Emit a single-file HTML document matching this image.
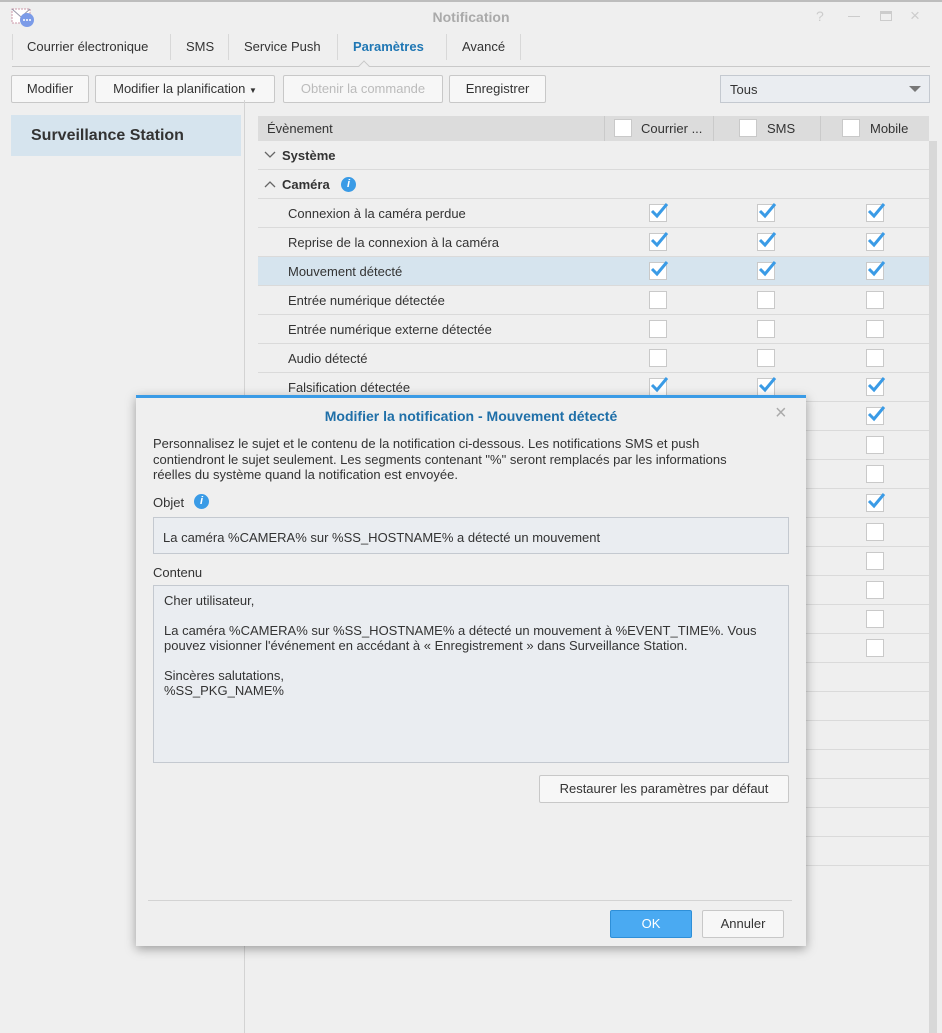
<!DOCTYPE html>
<html><head><meta charset="utf-8"><style>
*{box-sizing:border-box;margin:0;padding:0}
body{width:942px;height:1033px;background:#efefef;font-family:"Liberation Sans",sans-serif;font-size:13px;color:#333;position:relative;overflow:hidden}
.a{position:absolute}
.btn{position:absolute;top:75px;height:28px;border:1px solid #c8c8c8;border-radius:2px;background:#f7f7f7;line-height:26px;text-align:center;color:#333}
.tab{position:absolute;top:39px;color:#333}
.sep{position:absolute;top:34px;width:1px;height:26px;background:#d8d8d8}
.row{position:absolute;left:258px;width:671px;height:29px;border-bottom:1px solid #dadada}
.row span{position:absolute;left:30px;top:7px}
.cb{position:absolute;width:18px;height:18px;background:#fff;border:1px solid #c9c9c9}
.cb svg{position:absolute;left:-1px;top:-4px}
</style></head><body>
<div class="a" style="left:0;top:0;width:942px;height:2px;background:#bdbdbd"></div>
<svg class="a" style="left:11px;top:6px" width="26" height="22"><rect x="1" y="3" width="18" height="14" fill="#fff" stroke="#c9a" stroke-dasharray="2 1"/><path d="M1 3 L10 11 L19 3" stroke="#99a" fill="none"/><circle cx="16" cy="14" r="7" fill="#7b9be8"/><circle cx="13" cy="14" r="1" fill="#fff"/><circle cx="16" cy="14" r="1" fill="#fff"/><circle cx="19" cy="14" r="1" fill="#fff"/></svg>
<div class="a" style="left:0;width:942px;top:9px;text-align:center;font-weight:bold;font-size:14px;color:#aaa">Notification</div>
<div class="a" style="left:816px;top:8px;color:#ccc;font-size:14px">?</div>
<div class="a" style="left:848px;top:16px;width:12px;height:1px;background:#ccc"></div>
<div class="a" style="left:880px;top:11px;width:12px;height:10px;border:1px solid #ccc;border-top-width:3px"></div>
<div class="a" style="left:910px;top:6px;color:#ccc;font-size:17px">×</div>
<div class="sep" style="left:12px"></div>
<div class="tab" style="left:27px">Courrier électronique</div>
<div class="sep" style="left:170px"></div>
<div class="tab" style="left:186px">SMS</div>
<div class="sep" style="left:228px"></div>
<div class="tab" style="left:244px">Service Push</div>
<div class="sep" style="left:337px"></div>
<div class="tab" style="left:353px;color:#1f77b4;font-weight:bold">Paramètres</div>
<div class="sep" style="left:446px"></div>
<div class="tab" style="left:462px">Avancé</div>
<div class="sep" style="left:520px"></div>
<div class="a" style="left:12px;top:66px;width:918px;height:1px;background:#c9c9c9"></div>
<div class="a" style="left:360px;top:62px;width:8px;height:8px;background:#efefef;border-left:1px solid #c9c9c9;border-top:1px solid #c9c9c9;transform:rotate(45deg)"></div>
<div class="btn" style="left:11px;width:78px">Modifier</div>
<div class="btn" style="left:95px;width:180px">Modifier la planification <span style="font-size:8px">▼</span></div>
<div class="btn" style="left:283px;width:160px;color:#bbb">Obtenir la commande</div>
<div class="btn" style="left:449px;width:97px">Enregistrer</div>
<div class="a" style="left:720px;top:75px;width:210px;height:28px;border:1px solid #c4c9d0;background:#eaedf1;padding:6px 0 0 9px">Tous<span style="position:absolute;right:8px;top:10px;width:0;height:0;border-left:6px solid transparent;border-right:6px solid transparent;border-top:6px solid #777"></span></div>
<div class="a" style="left:11px;top:115px;width:230px;height:41px;background:#d6e4ee;padding:12px 0 0 20px;font-weight:bold;font-size:16px;color:#333">Surveillance Station</div>
<div class="a" style="left:244px;top:100px;width:1px;height:933px;background:#d3d3d3"></div>
<div class="a" style="left:258px;top:116px;width:671px;height:25px;background:#dcdcdc"></div>
<div class="a" style="left:267px;top:121px">Évènement</div>
<div class="a" style="left:604px;top:116px;width:1px;height:25px;background:#cacaca"></div>
<div class="a" style="left:713px;top:116px;width:1px;height:25px;background:#cacaca"></div>
<div class="a" style="left:820px;top:116px;width:1px;height:25px;background:#cacaca"></div>
<div class="cb" style="left:614px;top:119px"></div><div class="a" style="left:641px;top:121px">Courrier ...</div>
<div class="cb" style="left:739px;top:119px"></div><div class="a" style="left:767px;top:121px">SMS</div>
<div class="cb" style="left:842px;top:119px"></div><div class="a" style="left:870px;top:121px">Mobile</div>
<div class="a" style="left:929px;top:141px;width:8px;height:892px;background:#d8d8d8"></div>
<div class="row" style="top:141px"><span style="left:24px;font-weight:bold">Système</span></div>
<svg class="a" style="left:264px;top:151px" width="12" height="8"><path d="M1 1 L6 6 L11 1" stroke="#666" fill="none" stroke-width="1.3"/></svg>
<div class="row" style="top:170px"><span style="left:24px;font-weight:bold">Caméra</span></div>
<svg class="a" style="left:264px;top:180px" width="12" height="8"><path d="M1 7 L6 2 L11 7" stroke="#666" fill="none" stroke-width="1.3"/></svg>
<div class="a" style="left:341px;top:177px;width:15px;height:15px;border-radius:50%;background:#3a9be6;color:#fff;font-size:11px;font-style:italic;font-weight:bold;text-align:center;line-height:15px">i</div>
<div class="row" style="top:199px"><span>Connexion à la caméra perdue</span></div>
<div class="row" style="top:228px"><span>Reprise de la connexion à la caméra</span></div>
<div class="row" style="top:257px;background:#d6e4ee"><span>Mouvement détecté</span></div>
<div class="row" style="top:286px"><span>Entrée numérique détectée</span></div>
<div class="row" style="top:315px"><span>Entrée numérique externe détectée</span></div>
<div class="row" style="top:344px"><span>Audio détecté</span></div>
<div class="row" style="top:373px"><span>Falsification détectée</span></div>
<div class="row" style="top:402px"></div><div class="row" style="top:431px"></div><div class="row" style="top:460px"></div>
<div class="row" style="top:489px"></div><div class="row" style="top:518px"></div><div class="row" style="top:547px"></div>
<div class="row" style="top:576px"></div><div class="row" style="top:605px"></div><div class="row" style="top:634px"></div>
<div class="row" style="top:663px"></div><div class="row" style="top:692px"></div><div class="row" style="top:721px"></div>
<div class="row" style="top:750px"></div><div class="row" style="top:779px"></div><div class="row" style="top:808px"></div>
<div class="row" style="top:837px"></div>
<div class="cb" style="left:649px;top:204px"><svg width="20" height="20"><path d="M3 10 L8 15 L18 3" stroke="#3a9be6" stroke-width="3" fill="none"/></svg></div>
<div class="cb" style="left:757px;top:204px"><svg width="20" height="20"><path d="M3 10 L8 15 L18 3" stroke="#3a9be6" stroke-width="3" fill="none"/></svg></div>
<div class="cb" style="left:866px;top:204px"><svg width="20" height="20"><path d="M3 10 L8 15 L18 3" stroke="#3a9be6" stroke-width="3" fill="none"/></svg></div>
<div class="cb" style="left:649px;top:233px"><svg width="20" height="20"><path d="M3 10 L8 15 L18 3" stroke="#3a9be6" stroke-width="3" fill="none"/></svg></div>
<div class="cb" style="left:757px;top:233px"><svg width="20" height="20"><path d="M3 10 L8 15 L18 3" stroke="#3a9be6" stroke-width="3" fill="none"/></svg></div>
<div class="cb" style="left:866px;top:233px"><svg width="20" height="20"><path d="M3 10 L8 15 L18 3" stroke="#3a9be6" stroke-width="3" fill="none"/></svg></div>
<div class="cb" style="left:649px;top:262px"><svg width="20" height="20"><path d="M3 10 L8 15 L18 3" stroke="#3a9be6" stroke-width="3" fill="none"/></svg></div>
<div class="cb" style="left:757px;top:262px"><svg width="20" height="20"><path d="M3 10 L8 15 L18 3" stroke="#3a9be6" stroke-width="3" fill="none"/></svg></div>
<div class="cb" style="left:866px;top:262px"><svg width="20" height="20"><path d="M3 10 L8 15 L18 3" stroke="#3a9be6" stroke-width="3" fill="none"/></svg></div>
<div class="cb" style="left:649px;top:291px"></div><div class="cb" style="left:757px;top:291px"></div><div class="cb" style="left:866px;top:291px"></div>
<div class="cb" style="left:649px;top:320px"></div><div class="cb" style="left:757px;top:320px"></div><div class="cb" style="left:866px;top:320px"></div>
<div class="cb" style="left:649px;top:349px"></div><div class="cb" style="left:757px;top:349px"></div><div class="cb" style="left:866px;top:349px"></div>
<div class="cb" style="left:649px;top:378px"><svg width="20" height="20"><path d="M3 10 L8 15 L18 3" stroke="#3a9be6" stroke-width="3" fill="none"/></svg></div>
<div class="cb" style="left:757px;top:378px"><svg width="20" height="20"><path d="M3 10 L8 15 L18 3" stroke="#3a9be6" stroke-width="3" fill="none"/></svg></div>
<div class="cb" style="left:866px;top:378px"><svg width="20" height="20"><path d="M3 10 L8 15 L18 3" stroke="#3a9be6" stroke-width="3" fill="none"/></svg></div>
<div class="cb" style="left:866px;top:407px"><svg width="20" height="20"><path d="M3 10 L8 15 L18 3" stroke="#3a9be6" stroke-width="3" fill="none"/></svg></div>
<div class="cb" style="left:866px;top:436px"></div><div class="cb" style="left:866px;top:465px"></div>
<div class="cb" style="left:866px;top:494px"><svg width="20" height="20"><path d="M3 10 L8 15 L18 3" stroke="#3a9be6" stroke-width="3" fill="none"/></svg></div>
<div class="cb" style="left:866px;top:523px"></div><div class="cb" style="left:866px;top:552px"></div><div class="cb" style="left:866px;top:581px"></div><div class="cb" style="left:866px;top:610px"></div><div class="cb" style="left:866px;top:639px"></div>
<div class="a" style="left:136px;top:395px;width:670px;height:551px;background:#efefef;border-top:3px solid #3a9be6;box-shadow:0 3px 10px rgba(0,0,0,0.35)">
  <div class="a" style="left:0;width:670px;top:10px;text-align:center;font-weight:bold;font-size:14px;color:#1f6fa8">Modifier la notification - Mouvement détecté</div>
  <div class="a" style="left:639px;top:4px;font-size:20px;color:#aaa">×</div>
  <div class="a" style="left:17px;top:38px;width:605px;line-height:15.5px">Personnalisez le sujet et le contenu de la notification ci-dessous. Les notifications SMS et push contiendront le sujet seulement. Les segments contenant "%" seront remplacés par les informations réelles du système quand la notification est envoyée.</div>
  <div class="a" style="left:17px;top:97px">Objet</div>
  <div class="a" style="left:58px;top:96px;width:15px;height:15px;border-radius:50%;background:#3a9be6;color:#fff;font-size:11px;font-style:italic;font-weight:bold;text-align:center;line-height:15px">i</div>
  <div class="a" style="left:17px;top:119px;width:636px;height:37px;border:1px solid #c4c9d0;background:#eaedf1;padding:12px 0 0 9px">La caméra %CAMERA% sur %SS_HOSTNAME% a détecté un mouvement</div>
  <div class="a" style="left:17px;top:167px">Contenu</div>
  <div class="a" style="left:17px;top:187px;width:636px;height:178px;border:1px solid #c4c9d0;background:#eaedf1;padding:7px 0 0 10px;line-height:15px">Cher utilisateur,<br><br>La caméra %CAMERA% sur %SS_HOSTNAME% a détecté un mouvement à %EVENT_TIME%. Vous pouvez visionner l'événement en accédant à « Enregistrement » dans Surveillance Station.<br><br>Sincères salutations,<br>%SS_PKG_NAME%</div>
  <div class="a" style="left:403px;top:377px;width:250px;height:28px;border:1px solid #c8c8c8;border-radius:2px;background:#f7f7f7;text-align:center;line-height:26px">Restaurer les paramètres par défaut</div>
  <div class="a" style="left:12px;top:502px;width:644px;height:1px;background:#d3d3d3"></div>
  <div class="a" style="left:474px;top:512px;width:82px;height:28px;border:1px solid #2e8fd8;border-radius:2px;background:#4aaaf2;color:#fff;text-align:center;line-height:26px">OK</div>
  <div class="a" style="left:566px;top:512px;width:82px;height:28px;border:1px solid #c8c8c8;border-radius:2px;background:#f7f7f7;text-align:center;line-height:26px">Annuler</div>
</div>
</body></html>
